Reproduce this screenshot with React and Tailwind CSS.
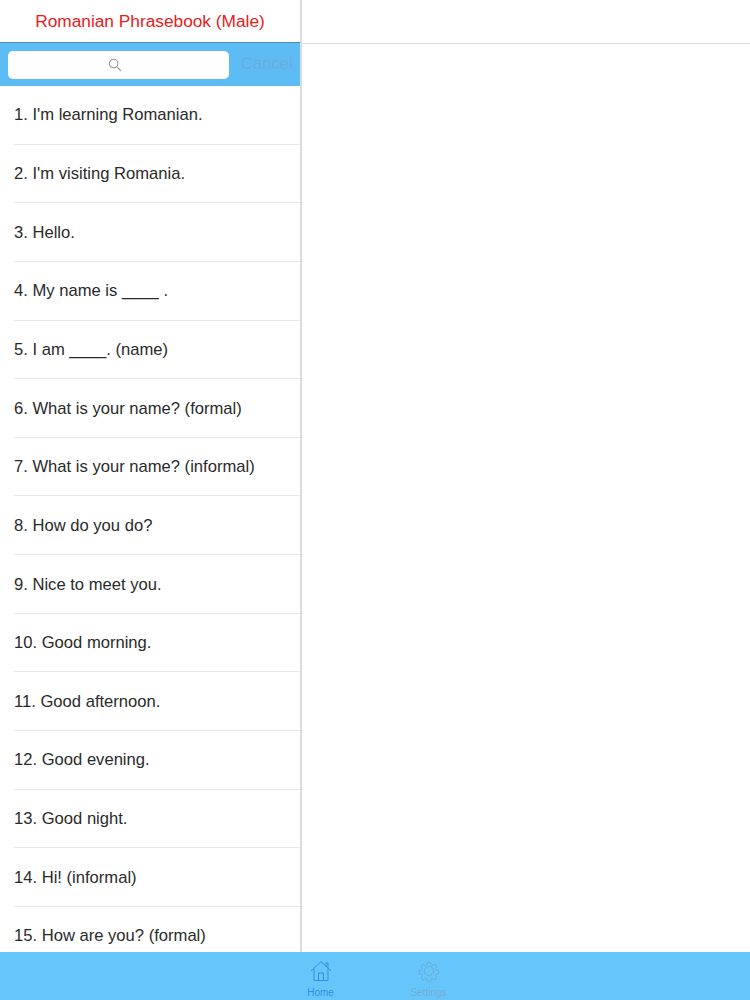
import React from 'react';

const phrases = [
  "1. I'm learning Romanian.",
  "2. I'm visiting Romania.",
  '3. Hello.',
  '4. My name is ____ .',
  '5. I am ____. (name)',
  '6. What is your name? (formal)',
  '7. What is your name? (informal)',
  '8. How do you do?',
  '9. Nice to meet you.',
  '10. Good morning.',
  '11. Good afternoon.',
  '12. Good evening.',
  '13. Good night.',
  '14. Hi! (informal)',
  '15. How are you? (formal)',
];

function HomeIcon() {
  return (
    <svg width="22" height="22" viewBox="0 0 22 22" fill="none" stroke="#2f8fe0" strokeWidth="1">
      <path d="M1 11 L11 1.5 L21 11" />
      <path d="M16 6.5 V3 H18 V8.5" />
      <path d="M4 9 V20.5 H18 V9" />
      <path d="M8.5 20.5 V13 H13.5 V20.5" />
    </svg>
  );
}

function GearIcon() {
  return (
    <svg width="22" height="22" viewBox="0 0 24 24" fill="none" stroke="#6f9fc4" strokeWidth="1" strokeDasharray="2.5 0.6">
      <circle cx="12" cy="12" r="5" />
      <path d="M10.3 1.5h3.4l.6 3 2.3 1 2.6-1.7 2.4 2.4-1.7 2.6 1 2.3 3 .6v3.4l-3 .6-1 2.3 1.7 2.6-2.4 2.4-2.6-1.7-2.3 1-.6 3h-3.4l-.6-3-2.3-1-2.6 1.7-2.4-2.4 1.7-2.6-1-2.3-3-.6v-3.4l3-.6 1-2.3-1.7-2.6 2.4-2.4 2.6 1.7 2.3-1z" transform="translate(1.2 1.2) scale(0.9)" />
    </svg>
  );
}

export default function App() {
  return (
    <div className="h-[1000px] w-[750px] flex flex-col overflow-hidden bg-white font-['Liberation_Sans',sans-serif]">
      <div className="flex flex-1 min-h-0">
        <div className="w-[302px] shrink-0 flex flex-col border-r-2 border-[#dcdcdf]">
          <div className="h-[43px] shrink-0 flex items-center justify-center pt-px text-[17.3px] text-[#e8201c] border-b border-[#4a8db5]">
            Romanian Phrasebook (Male)
          </div>
          <div className="h-[43px] shrink-0 flex items-center bg-[#5ebcf5] pl-2">
            <div className="w-[221px] h-[28px] rounded-[5px] bg-white flex items-center justify-center pr-[8px]">
              <svg width="14" height="14" viewBox="0 0 14 14" fill="none" stroke="#9a9a9a" strokeWidth="1.1">
                <circle cx="5.6" cy="5.6" r="4.3" />
                <path d="M8.8 8.8 L13 13" />
              </svg>
            </div>
            <span className="ml-[12px] text-[16.6px] whitespace-nowrap text-[#6aaedb]">Cancel</span>
          </div>
          <div className="flex-1 min-h-0 overflow-hidden pl-[14px]">
            {phrases.map((p) => (
              <div key={p} className="h-[58.65px] flex items-center pt-[2px] border-b border-[#e8e8ea] text-[16.6px] text-[#2a2a2a]">
                {p}
              </div>
            ))}
          </div>
        </div>
        <div className="flex-1">
          <div className="h-[44px] border-b border-[#dddddd]"></div>
        </div>
      </div>
      <div className="h-[48px] shrink-0 flex justify-center gap-[64px] bg-[#66c6fb] pr-[1px]">
        <div className="w-[44px] flex flex-col items-center pt-[8px]">
          <HomeIcon />
          <span className="mt-[5px] text-[10px] leading-[12px] text-[#2f8fe0]">Home</span>
        </div>
        <div className="w-[44px] flex flex-col items-center pt-[8px]">
          <GearIcon />
          <span className="mt-[5px] text-[10px] leading-[12px] whitespace-nowrap text-[#74aed4]">Settings</span>
        </div>
      </div>
    </div>
  );
}
